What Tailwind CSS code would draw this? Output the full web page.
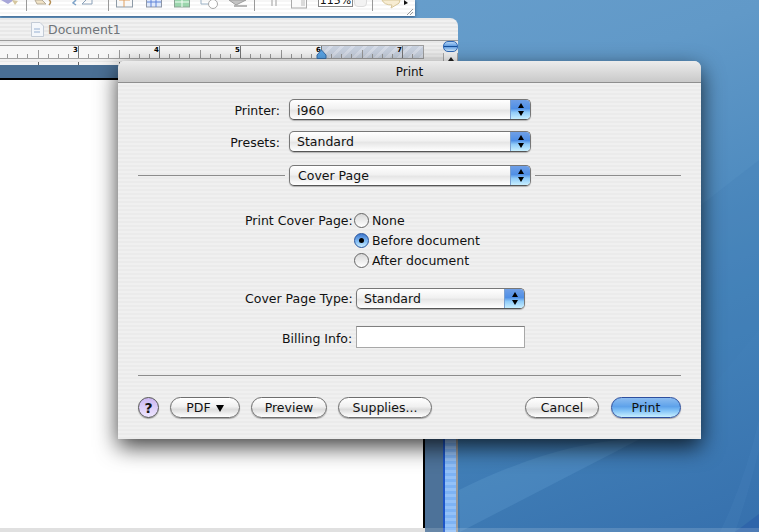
<!DOCTYPE html>
<html lang="en">
<head>
  <meta charset="UTF-8" />
  <title>Print</title>
  <script src="https://cdn.jsdelivr.net/npm/@tailwindcss/browser@4"></script>
</head>
<body class="m-0">
<div class="relative w-[759px] h-[532px] overflow-hidden font-['DejaVu_Sans',sans-serif] text-[12.5px] leading-none text-[#111] bg-[linear-gradient(160deg,#6ca2cf_0%,#6199c8_35%,#4483ba_70%,#3670ad_100%)]">

  <!-- desktop swooshes -->
  <svg class="absolute left-0 top-0" width="759" height="532" fill="none">
    <path d="M701 205 L759 160 V330 L701 400 Z" fill="#3f7db5" fill-opacity="0.25"/>
    <path d="M459 490 Q560 440 640 439 L460 532 Z" fill="#6ba6d6" fill-opacity="0.25"/>
    <path d="M735 532 L759 514 V532 Z" fill="#2f65aa"/>
    <path d="M720 532 Q745 480 759 420 V450 Q748 495 735 532 Z" fill="#5a97cb" fill-opacity="0.12"/>
  </svg>

  <!-- toolbar window -->
  <div class="absolute left-0 top-0 w-[415px] h-[16px] bg-[repeating-linear-gradient(180deg,#f6f6f6_0,#f6f6f6_2px,#ffffff_2px,#ffffff_4px)] shadow-[0_1px_3px_rgba(30,50,80,0.6)] overflow-hidden">
    <div class="absolute left-[26px] top-0 w-px h-[11px] bg-[#999]"></div>
    <div class="absolute left-[108px] top-0 w-px h-[11px] bg-[#999]"></div>
    <div class="absolute left-[254px] top-0 w-px h-[11px] bg-[#999]"></div>
    <div class="absolute left-[372px] top-0 w-px h-[11px] bg-[#999]"></div>
    <svg class="absolute left-0 top-0" width="415" height="16" fill="none">
      <path d="M1 0 L8 4 L14 0 Z" fill="#a7a6d8"/>
      <path d="M12 0 L18 1 L15 5 Z" fill="#d6c7a0"/>
      <path d="M35 0 L37 4 L46 4 L42 0 Z" fill="#f1e3c6" stroke="#b5ab98"/>
      <path d="M49 0 Q52 2 49 5" stroke="#b58f55" stroke-width="1.5"/>
      <path d="M76 0 L73 3 L76 5" stroke="#7da2c8" stroke-width="1.5"/>
      <path d="M82 4 H92 V0 M82 4 L86 0" stroke="#8aa0b8"/>
      <rect x="116.500" y="-3" width="16" height="10" fill="#f8f8f8" stroke="#8d9aa6"/>
      <path d="M119 0 H130 M124 -3 V7" stroke="#e0a060"/>
      <rect x="146.500" y="-3" width="15" height="10" fill="#dfe9fb" stroke="#8d96a6"/>
      <path d="M147 2 H161 M151 0 V7 M156 0 V7" stroke="#5f83d8"/>
      <rect x="174.500" y="-3" width="15" height="10" fill="#9bd6ad" stroke="#8aa494"/>
      <path d="M182 -3 V7 M175 2 H189" stroke="#f4fff6"/>
      <path d="M201 0 V4 H209" stroke="#9ab0c4"/>
      <circle cx="213" cy="4" r="4.500" fill="#fff" stroke="#a8a8a8"/>
      <path d="M229 0 L236 5 L246 0 Z" fill="#c3c3c3" stroke="#9d9d9d"/>
      <path d="M234 6 H247" stroke="#9f9f9f" stroke-width="1.500"/>
      <path d="M272 0 V6 M276 0 V6" stroke="#bdbdbd" stroke-width="1.500"/>
      <rect x="291.500" y="-3" width="15" height="11" fill="#fafafa" stroke="#aaa"/>
      <path d="M301 1 H305 M301 3 H305 M301 5 H305" stroke="#bbb"/>
    </svg>
    <div class="absolute left-[318px] top-[-6px] w-[35px] h-[13px] bg-white border border-[#888] text-center text-[11px] leading-[12px]">115%</div>
    <div class="absolute left-[354px] top-[-4px] w-[13px] h-[11px] bg-[#f3f3f3] border border-[#ddd] rounded-sm"></div>
    <svg class="absolute left-0 top-0" width="415" height="16" fill="none">
      <path d="M382 0 Q384 5 392 5 L391 8 L396 5 Q400 4 400 0 Z" fill="#f7ecd2" stroke="#d8c79a"/>
      <path d="M404 0 L408 3 L404 5 Z" fill="#111"/>
      <path d="M407 15 L413 9 M410 15 L413 12" stroke="#999"/>
    </svg>
  </div>

  <!-- document window -->
  <div class="absolute left-0 top-[18px] w-[458px] h-[514px] rounded-tr-[8px] overflow-hidden">
    <div class="h-[23px] flex items-center bg-[repeating-linear-gradient(180deg,#e8e8e8_0,#e8e8e8_2px,#f1f1f1_2px,#f1f1f1_4px)] border-b border-[#9a9a9a]">
      <svg class="ml-[31px]" width="13" height="15" fill="none">
        <path d="M0.500 0.500 H9 L12.500 4 V14.500 H0.500 Z" fill="#f4f7fb" stroke="#c3cbd6"/>
        <path d="M3 7 H9 M3 10 H9" stroke="#c5d3e6" stroke-width="2"/>
      </svg>
      <span class="ml-[4px] pt-[2px] text-[12.500px] text-[#6f7479]">Document1</span>
    </div>
    <div class="relative h-[21px] bg-[repeating-linear-gradient(180deg,#e8e8e8_0,#e8e8e8_2px,#f1f1f1_2px,#f1f1f1_4px)]">
      <!-- ruler -->
      <div class="absolute left-0 top-[4px] w-[424px] h-[14px] bg-[#f7f7f7] border-y border-[#a0a0a0] border-r overflow-hidden">
        <div class="absolute left-[322px] top-0 w-[102px] h-full bg-[repeating-linear-gradient(135deg,#c9d2e0_0,#c9d2e0_5px,#d8deea_5px,#d8deea_8px)]"></div>
        <svg id="ruler" class="absolute left-0 top-0" width="424" height="12"></svg>
        <span class="absolute left-[73px] top-[1px] text-[7px] font-bold text-black">3</span>
        <span class="absolute left-[154px] top-[1px] text-[7px] font-bold text-black">4</span>
        <span class="absolute left-[235px] top-[1px] text-[7px] font-bold text-black">5</span>
        <span class="absolute left-[316px] top-[1px] text-[7px] font-bold text-black">6</span>
        <span class="absolute left-[397px] top-[1px] text-[7px] font-bold text-black">7</span>
      </div>
      <svg class="absolute left-[316px] top-[9px]" width="11" height="9">
        <path d="M5.500 0 L10 5 V8.500 H1 V5 Z" fill="#59a5e8" stroke="#3a6fa8"/>
      </svg>
      <div class="absolute left-[443px] top-0 w-[15px] h-[11px] rounded-[5px] border border-[#2f68b5] bg-[linear-gradient(180deg,#b4d4f5,#5a9ae2_50%,#cfe8fc)]">
        <div class="mt-[4px] h-px bg-[#164f9a]"></div>
      </div>
      <div class="absolute left-[443px] top-[12px] w-[15px] h-[9px] bg-[#f4f4f4] border-x border-[#aaa] flex justify-center pt-[4px]">
        <span class="w-0 h-0 border-x-[3px] border-x-transparent border-b-[4px] border-b-[#222]"></span>
      </div>
    </div>
    <div class="relative h-[450px]">
      <!-- page strip -->
      <div class="relative h-[3px] bg-[#f4f4f4]">
        <div class="absolute left-[38px] top-0 w-px h-[3px] bg-[#666]"></div>
        <div class="absolute left-[78px] top-0 w-px h-[3px] bg-[#666]"></div>
        <div class="absolute left-[119px] top-0 w-px h-[3px] bg-[#666]"></div>
      </div>
      <div class="h-[13px] w-[425px] bg-[#4a6f94]"></div>
      <div class="h-[450px] w-[425px] bg-white border-t-2 border-r-2 border-black"></div>
      <div class="absolute left-[425px] top-[3px] w-[18px] h-[470px] bg-[#4d7299]"></div>
      <div class="absolute left-[443px] top-[3px] w-[15px] h-[470px] flex">
        <div class="w-[2px] bg-[#1c55c8]"></div>
        <div class="w-[11px] bg-[repeating-linear-gradient(180deg,#7db3f5_0,#7db3f5_3px,#93c1f8_3px,#93c1f8_6px)]"></div>
        <div class="w-[2px] bg-[#9a9a9a]"></div>
      </div>
    </div>
  </div>
  <!-- strip along the bottom of the screen -->
  <div class="absolute left-0 top-[528px] w-[759px] h-[4px] flex">
    <div class="w-[425px] bg-[#e0e0e0]"></div>
    <div class="flex-1 bg-white/15"></div>
  </div>

  <!-- print sheet -->
  <div class="absolute left-[118px] top-[61px] w-[583px] h-[378px] rounded-t-[7px] bg-[repeating-linear-gradient(180deg,#ebebeb_0,#ebebeb_2px,#f0f0f0_2px,#f0f0f0_4px)] shadow-[0_8px_22px_rgba(0,0,0,0.75)]">
    <div class="h-[22px] rounded-t-[7px] flex items-center justify-center border-b border-[#8f8f8f] bg-[linear-gradient(180deg,#ececec,#c9c9c9)] text-[12px] pt-px">Print</div>

    <div class="relative">
      <!-- printer / presets rows -->
      <div class="flex flex-col pt-[16px] pl-[171px] gap-[11px]">
        <div class="flex items-center h-[21px]">
          <span class="w-[91px] text-right pr-[9px] ml-[-91px] pt-[3px]">Printer:</span>
          <div class="relative w-[242px] h-[21px] rounded-[5px] border border-[#777] border-b-[#555] bg-[linear-gradient(180deg,#fff_0%,#f1f1f1_45%,#e6e6e6_55%,#fff_100%)] shadow-[0_1px_1px_rgba(0,0,0,0.25)] flex items-center pl-[7px] overflow-hidden">
            <span class="pt-[3px]">i960</span>
            <span class="absolute right-0 top-0 bottom-0 w-[20px] flex flex-col items-center justify-center gap-[3px] bg-[linear-gradient(180deg,#6f9fe6_0%,#4f8fe6_45%,#8fcbf8_65%,#c8efff_100%)] border-l border-[#7aa0d0]">
              <span class="w-0 h-0 border-x-[3.5px] border-x-transparent border-b-[5px] border-b-black"></span>
              <span class="w-0 h-0 border-x-[3.5px] border-x-transparent border-t-[5px] border-t-black"></span>
            </span>
          </div>
        </div>
        <div class="flex items-center h-[21px]">
          <span class="w-[91px] text-right pr-[9px] ml-[-91px] pt-[3px]">Presets:</span>
          <div class="relative w-[242px] h-[21px] rounded-[5px] border border-[#777] border-b-[#555] bg-[linear-gradient(180deg,#fff_0%,#f1f1f1_45%,#e6e6e6_55%,#fff_100%)] shadow-[0_1px_1px_rgba(0,0,0,0.25)] flex items-center pl-[7px] overflow-hidden">
            <span class="pt-[2px]">Standard</span>
            <span class="absolute right-0 top-0 bottom-0 w-[20px] flex flex-col items-center justify-center gap-[3px] bg-[linear-gradient(180deg,#6f9fe6_0%,#4f8fe6_45%,#8fcbf8_65%,#c8efff_100%)] border-l border-[#7aa0d0]">
              <span class="w-0 h-0 border-x-[3.5px] border-x-transparent border-b-[5px] border-b-black"></span>
              <span class="w-0 h-0 border-x-[3.5px] border-x-transparent border-t-[5px] border-t-black"></span>
            </span>
          </div>
        </div>
      </div>

      <!-- pane chooser -->
      <div class="flex items-center mt-[13px] pl-[20px] h-[21px]">
        <div class="w-[147px] h-px bg-[#8c8c8c]"></div>
        <div class="relative ml-[4px] w-[242px] h-[21px] rounded-[5px] border border-[#777] border-b-[#555] bg-[linear-gradient(180deg,#fff_0%,#f1f1f1_45%,#e6e6e6_55%,#fff_100%)] shadow-[0_1px_1px_rgba(0,0,0,0.25)] flex items-center pl-[8px] overflow-hidden">
          <span class="pt-[2px]">Cover Page</span>
          <span class="absolute right-0 top-0 bottom-0 w-[20px] flex flex-col items-center justify-center gap-[3px] bg-[linear-gradient(180deg,#6f9fe6_0%,#4f8fe6_45%,#8fcbf8_65%,#c8efff_100%)] border-l border-[#7aa0d0]">
            <span class="w-0 h-0 border-x-[3.5px] border-x-transparent border-b-[5px] border-b-black"></span>
            <span class="w-0 h-0 border-x-[3.5px] border-x-transparent border-t-[5px] border-t-black"></span>
          </span>
        </div>
        <div class="ml-[4px] w-[146px] h-px bg-[#8c8c8c]"></div>
      </div>

      <!-- radios -->
      <div class="relative mt-[27px] h-[60px] pl-[236px]">
        <span class="absolute left-[127px] top-[2px]">Print Cover Page:</span>
        <div class="flex flex-col gap-[5px]">
          <label class="flex items-center h-[15px] gap-[3px]">
            <span class="w-[15px] h-[15px] rounded-full border border-[#666] bg-[linear-gradient(180deg,#d8d8d8,#ffffff)]"></span>
            <span class="pt-[2px]">None</span>
          </label>
          <label class="flex items-center h-[15px] gap-[3px]">
            <span class="w-[15px] h-[15px] rounded-full border border-[#24529c] bg-[linear-gradient(180deg,#3f79cf,#87c0f5_60%,#cdefff)] flex items-center justify-center">
              <span class="w-[5px] h-[5px] rounded-full bg-black"></span>
            </span>
            <span class="pt-[2px]">Before document</span>
          </label>
          <label class="flex items-center h-[15px] gap-[3px]">
            <span class="w-[15px] h-[15px] rounded-full border border-[#666] bg-[linear-gradient(180deg,#d8d8d8,#ffffff)]"></span>
            <span class="pt-[2px]">After document</span>
          </label>
        </div>
      </div>

      <!-- cover page type -->
      <div class="flex items-center mt-[15px] h-[21px] pl-[127px]">
        <span class="w-[111px] whitespace-nowrap pt-[2px]">Cover Page Type:</span>
        <div class="relative w-[169px] h-[21px] rounded-[5px] border border-[#777] border-b-[#555] bg-[linear-gradient(180deg,#fff_0%,#f1f1f1_45%,#e6e6e6_55%,#fff_100%)] shadow-[0_1px_1px_rgba(0,0,0,0.25)] flex items-center pl-[7px] overflow-hidden">
          <span class="pt-[2px]">Standard</span>
          <span class="absolute right-0 top-0 bottom-0 w-[20px] flex flex-col items-center justify-center gap-[3px] bg-[linear-gradient(180deg,#6f9fe6_0%,#4f8fe6_45%,#8fcbf8_65%,#c8efff_100%)] border-l border-[#7aa0d0]">
            <span class="w-0 h-0 border-x-[3.5px] border-x-transparent border-b-[5px] border-b-black"></span>
            <span class="w-0 h-0 border-x-[3.5px] border-x-transparent border-t-[5px] border-t-black"></span>
          </span>
        </div>
      </div>

      <!-- billing -->
      <div class="flex items-center mt-[17px] h-[22px] pl-[164px]">
        <span class="w-[74px] whitespace-nowrap pt-[4px]">Billing Info:</span>
        <div class="w-[169px] h-[22px] bg-white border border-[#a8a8a8] border-t-[#7f7f7f]"></div>
      </div>

      <div class="ml-[20px] mt-[27px] w-[543px] h-px bg-[#8c8c8c]"></div>

      <!-- bottom buttons -->
      <div class="flex items-center mt-[21px] pl-[20px] h-[21px]">
        <div class="w-[21px] h-[21px] rounded-full border border-[#555] bg-[linear-gradient(180deg,#cbb6f2,#eee6ff)] flex items-center justify-center font-bold text-[14px] shadow-[0_1px_1px_rgba(0,0,0,0.3)]">?</div>
        <button class="ml-[11px] w-[70px] h-[21px] pt-[2px] rounded-full border border-[#6e6e6e] bg-[linear-gradient(180deg,#fff_0%,#f0f0f0_45%,#dcdcdc_60%,#fff_100%)] shadow-[0_1px_1px_rgba(0,0,0,0.3)] flex items-center justify-center gap-[5px]">
          <span>PDF</span>
          <span class="w-0 h-0 border-x-[4px] border-x-transparent border-t-[7px] border-t-black"></span>
        </button>
        <button class="ml-[11px] w-[76px] h-[21px] pt-[2px] rounded-full border border-[#6e6e6e] bg-[linear-gradient(180deg,#fff_0%,#f0f0f0_45%,#dcdcdc_60%,#fff_100%)] shadow-[0_1px_1px_rgba(0,0,0,0.3)]">Preview</button>
        <button class="ml-[11px] w-[94px] h-[21px] pt-[2px] rounded-full border border-[#6e6e6e] bg-[linear-gradient(180deg,#fff_0%,#f0f0f0_45%,#dcdcdc_60%,#fff_100%)] shadow-[0_1px_1px_rgba(0,0,0,0.3)]">Supplies...</button>
        <button class="ml-auto w-[74px] h-[21px] pt-[2px] rounded-full border border-[#6e6e6e] bg-[linear-gradient(180deg,#fff_0%,#f0f0f0_45%,#dcdcdc_60%,#fff_100%)] shadow-[0_1px_1px_rgba(0,0,0,0.3)]">Cancel</button>
        <button class="ml-[12px] mr-[20px] w-[70px] h-[21px] pt-[2px] rounded-full border border-[#2d4f9e] bg-[linear-gradient(180deg,#8cbcf0_0%,#5ea2ea_45%,#7fc0f6_65%,#c8f0ff_100%)] shadow-[0_1px_1px_rgba(0,0,0,0.3)]">Print</button>
      </div>
    </div>
  </div>
</div>

<script>
  // ruler ticks, 81px per inch, one tick every eighth
  const ruler = document.getElementById('ruler')
  let ticks = ''
  for (let i = 0; i * 81 / 8 < 424; i++) {
    const x = Math.round(-3 + i * 81 / 8) + 0.5
    const h = i % 8 === 0 ? 12 : i % 4 === 0 ? 8 : 4
    ticks += `<path d="M${x} ${12 - h} V12" stroke="${i % 8 === 0 ? '#777' : '#999'}"/>`
  }
  ruler.innerHTML = ticks
</script>
</body>
</html>
